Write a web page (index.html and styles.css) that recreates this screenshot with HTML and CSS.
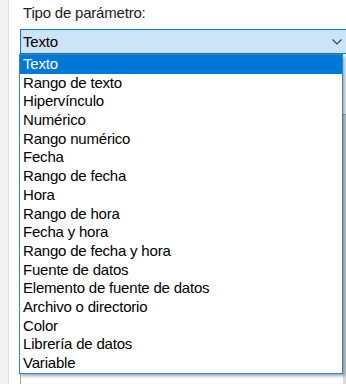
FILE: index.html
```html
<!DOCTYPE html>
<html lang="es">
<head>
<meta charset="utf-8">
<link rel="stylesheet" href="styles.css">
</head>
<body>
<div class="page">
  <div class="gutter"></div>
  <div class="main">
    <div class="label">Tipo de parámetro:</div>
    <div class="combo">
      <span class="combo-text">Texto</span>
      <svg class="chev" width="10" height="6" viewBox="0 0 10 6"><path d="M0.5 0.5 L5 5 L9.5 0.5" fill="none" stroke="#3a3a3a" stroke-width="1.1"/></svg>
    </div>
    <div class="under"><div class="under-scroll"></div></div>
  </div>
</div>
<ul class="list">
  <li class="sel">Texto</li>
  <li>Rango de texto</li>
  <li>Hipervínculo</li>
  <li>Numérico</li>
  <li>Rango numérico</li>
  <li>Fecha</li>
  <li>Rango de fecha</li>
  <li>Hora</li>
  <li>Rango de hora</li>
  <li>Fecha y hora</li>
  <li>Rango de fecha y hora</li>
  <li>Fuente de datos</li>
  <li>Elemento de fuente de datos</li>
  <li>Archivo o directorio</li>
  <li>Color</li>
  <li>Librería de datos</li>
  <li>Variable</li>
</ul>
</body>
</html>
```
FILE: styles.css
```css
html, body {
  margin: 0;
  padding: 0;
}
body {
  width: 346px;
  height: 384px;
  overflow: hidden;
  background: #ffffff;
  font-family: "Liberation Sans", Arial, sans-serif;
  font-size: 15px;
  letter-spacing: -0.2px;
  color: #000;
  position: relative;
}
.page {
  display: flex;
  height: 384px;
}
.gutter {
  width: 8px;
  flex: none;
  background: #f3f3f3;
  border-right: 1px solid #dcdcdc;
}
.main {
  flex: 1;
  display: flex;
  flex-direction: column;
  min-width: 0;
}
.label {
  margin-top: 3px;
  padding-left: 14px;
  line-height: 20px;
  color: #1a1a1a;
}
.combo {
  margin-top: 6px;
  margin-left: 11px;
  width: 319px;
  height: 23px;
  border: 1px solid #0078d7;
  background: #cce4f7;
  display: flex;
  align-items: center;
  justify-content: space-between;
  padding-left: 2px;
  padding-right: 8px;
  box-sizing: content-box;
}
.combo-text {
  line-height: 20px;
}
.chev {
  display: block;
}
.under {
  margin-top: 60px;
  margin-left: 11px;
  flex: 1;
  border-left: 1px solid #a6a6a6;
  border-top: 1px solid #a6a6a6;
  display: flex;
  justify-content: flex-end;
}
.under-scroll {
  width: 3px;
  background: #d9d9d9;
}
.list {
  position: absolute;
  left: 19px;
  top: 54px;
  width: 322px;
  margin: 0;
  padding: 0;
  list-style: none;
  border: 1px solid #2b87d8;
  background: #fff;
  box-shadow: 2px 2px 3px rgba(0, 0, 0, 0.35);
}
.list li {
  height: 18.7px;
  line-height: 18.7px;
  padding-left: 3px;
  white-space: nowrap;
}
.list li.sel {
  background: #0078d7;
  color: #fff;
}
```
